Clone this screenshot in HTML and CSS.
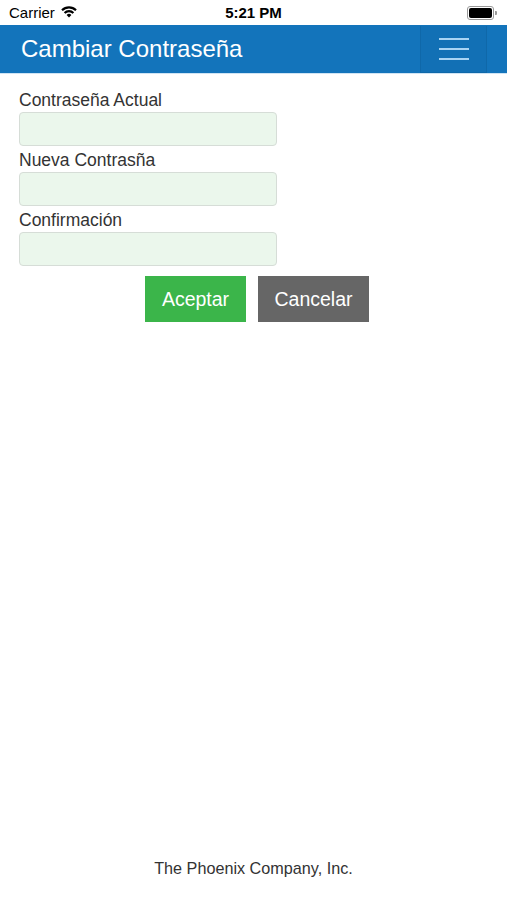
FILE: index.html
```html
<!DOCTYPE html>
<html>
<head>
    <title>Cambiar Contraseña</title>
    <link rel="stylesheet" href="styles.css">
</head>
<body>
    <div class="screen">
        <div class="status-bar">
            <div class="carrier">
                Carrier
                <svg class="wifi" width="18" height="13" viewBox="0 0 18 13">
                    <path d="M9 12.5 L6.6 10 A3.4 3.4 0 0 1 11.4 10 Z" fill="#000"/>
                    <path d="M4.6 8 A6.2 6.2 0 0 1 13.4 8" stroke="#000" stroke-width="2.2" fill="none"/>
                    <path d="M2 5.2 A10 10 0 0 1 16 5.2" stroke="#000" stroke-width="2.2" fill="none"/>
                </svg>
            </div>
            <div class="time">5:21 PM</div>
            <div class="battery">
                <span class="battery-body"><span class="battery-level"></span></span>
                <span class="battery-tip"></span>
            </div>
        </div>

        <div class="nav-bar">
            <h1 class="nav-title">Cambiar Contraseña</h1>
            <button class="menu-button">
                <span></span>
                <span></span>
                <span></span>
            </button>
        </div>

        <form class="form">
            <label class="field-label" for="actual">Contraseña Actual</label>
            <input class="field-input" type="password" id="actual">

            <label class="field-label" for="nueva">Nueva Contrasña</label>
            <input class="field-input" type="password" id="nueva">

            <label class="field-label" for="confirmacion">Confirmación</label>
            <input class="field-input" type="password" id="confirmacion">

            <div class="actions">
                <button type="button" class="btn btn-ok">Aceptar</button>
                <button type="button" class="btn btn-cancel">Cancelar</button>
            </div>
        </form>

        <div class="footer">The Phoenix Company, Inc.</div>
    </div>
</body>
</html>
```

FILE: styles.css
```css
body {
    margin: 0;
    font-family: "Liberation Sans", Arial, sans-serif;
    background: #fff;
    color: #333;
}
.screen {
    height: 900px;
    display: flex;
    flex-direction: column;
}
.status-bar {
    height: 25px;
    display: flex;
    align-items: center;
    justify-content: space-between;
    padding: 0 10px 0 9px;
    font-size: 15px;
    color: #000;
    position: relative;
}
.carrier {
    display: flex;
    align-items: center;
    gap: 5px;
}
.wifi {
    margin-top: -2px;
}
.time {
    position: absolute;
    left: 0;
    right: 0;
    text-align: center;
    font-weight: bold;
}
.battery {
    display: flex;
    align-items: center;
}
.battery-body {
    width: 23px;
    height: 10px;
    border: 1px solid #999;
    border-radius: 3px;
    padding: 1px;
    box-sizing: content-box;
    display: flex;
}
.battery-level {
    flex: 1;
    background: #000;
    border-radius: 2px;
}
.battery-tip {
    width: 2px;
    height: 4px;
    background: #999;
    border-radius: 0 1px 1px 0;
    margin-left: 1px;
}
.nav-bar {
    height: 48px;
    background: #1374bb;
    display: flex;
    align-items: center;
    justify-content: space-between;
    padding: 0 20px 0 21px;
    border-bottom: 1px solid #cfe4f4;
}
.nav-title {
    margin: 0;
    font-size: 24px;
    font-weight: normal;
    color: #fff;
}
.menu-button {
    width: 67px;
    height: 47px;
    background: #1270b5;
    border: 1px solid #0f68a9;
    border-top: none;
    display: flex;
    flex-direction: column;
    align-items: center;
    justify-content: center;
    gap: 8px;
    padding: 0;
}
.menu-button span {
    display: block;
    width: 30px;
    height: 2px;
    background: #a9d4f4;
}
.form {
    display: flex;
    flex-direction: column;
    align-items: flex-start;
    padding: 16px 19px 0;
}
.field-label {
    font-size: 17.5px;
    line-height: 20px;
    color: #333;
    margin-bottom: 2px;
}
.field-input {
    width: 258px;
    height: 34px;
    box-sizing: border-box;
    background: #ebf7ec;
    border: 1px solid #d6ddd7;
    border-radius: 4px;
    margin: 0 0 4px;
}
.actions {
    align-self: stretch;
    display: flex;
    justify-content: center;
    gap: 12px;
    margin: 6px 0 0 7px;
}
.btn {
    height: 46px;
    border: none;
    color: #fff;
    font-family: inherit;
    font-size: 19.5px;
    padding: 0;
}
.btn-ok {
    width: 101px;
    background: #3bb54a;
}
.btn-cancel {
    width: 111px;
    background: #666;
}
.footer {
    margin-top: auto;
    margin-bottom: 22px;
    text-align: center;
    font-size: 16.2px;
    color: #333;
}
```
